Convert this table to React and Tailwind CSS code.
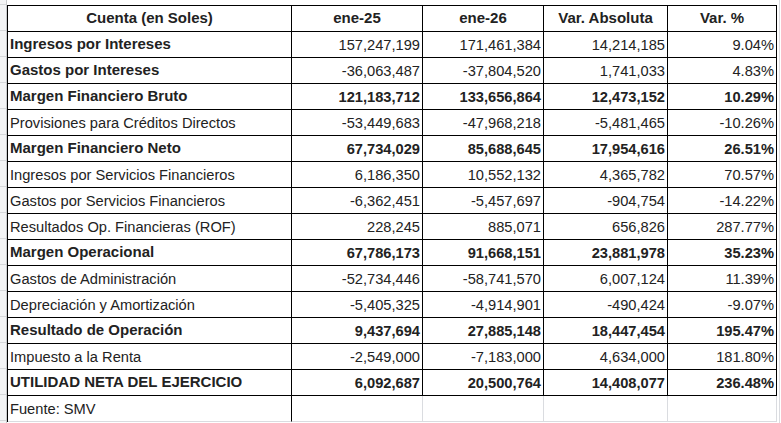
const rows = [
  { label: 'Ingresos por Intereses', values: ['157,247,199', '171,461,384', '14,214,185', '9.04%'], boldLabel: true },
  { label: 'Gastos por Intereses', values: ['-36,063,487', '-37,804,520', '1,741,033', '4.83%'], boldLabel: true },
  { label: 'Margen Financiero Bruto', values: ['121,183,712', '133,656,864', '12,473,152', '10.29%'], bold: true },
  { label: 'Provisiones para Créditos Directos', values: ['-53,449,683', '-47,968,218', '-5,481,465', '-10.26%'] },
  { label: 'Margen Financiero Neto', values: ['67,734,029', '85,688,645', '17,954,616', '26.51%'], bold: true },
  { label: 'Ingresos por Servicios Financieros', values: ['6,186,350', '10,552,132', '4,365,782', '70.57%'] },
  { label: 'Gastos por Servicios Financieros', values: ['-6,362,451', '-5,457,697', '-904,754', '-14.22%'] },
  { label: 'Resultados Op. Financieras (ROF)', values: ['228,245', '885,071', '656,826', '287.77%'] },
  { label: 'Margen Operacional', values: ['67,786,173', '91,668,151', '23,881,978', '35.23%'], bold: true },
  { label: 'Gastos de Administración', values: ['-52,734,446', '-58,741,570', '6,007,124', '11.39%'] },
  { label: 'Depreciación y Amortización', values: ['-5,405,325', '-4,914,901', '-490,424', '-9.07%'] },
  { label: 'Resultado de Operación', values: ['9,437,694', '27,885,148', '18,447,454', '195.47%'], bold: true },
  { label: 'Impuesto a la Renta', values: ['-2,549,000', '-7,183,000', '4,634,000', '181.80%'] },
  { label: 'UTILIDAD NETA DEL EJERCICIO', values: ['6,092,687', '20,500,764', '14,408,077', '236.48%'], bold: true },
];

const headers = ['Cuenta (en Soles)', 'ene-25', 'ene-26', 'Var. Absoluta', 'Var. %'];

// row header strip on the left edge of the sheet
const stripCells = Array.from({ length: 17 });

const App = () => {
  return (
    <div className="w-[781px] h-[423px] bg-white overflow-hidden flex font-['Liberation_Sans',Arial,sans-serif] text-[14.67px] text-[#222]">
      <div className="w-[7px] shrink-0 flex flex-col bg-[#f3f4f5] border-r border-[#c9cbcd]">
        <div className="h-[5px] shrink-0 border-b border-[#d6d8da]" />
        {stripCells.map((_, i) => (
          <div key={i} className="h-[26px] shrink-0 border-b border-[#d6d8da]" />
        ))}
      </div>

      <div className="flex flex-col shrink-0">
        <div className="h-[5px] shrink-0" />
        <div className="grid grid-cols-[284px_131px_121px_124px_109px] border-l border-t border-black">
          {headers.map((header) => (
            <div
              key={header}
              className="h-[26px] flex items-center justify-center font-bold text-[15px] border-r border-b border-black"
            >
              {header}
            </div>
          ))}

          {rows.map((row) => (
            <div key={row.label} className="contents">
              <div
                className={`h-[26px] flex items-center pl-[2px] whitespace-nowrap border-r border-b border-black ${
                  row.bold || row.boldLabel ? 'font-bold text-[15px]' : ''
                }`}
              >
                {row.label}
              </div>
              {row.values.map((value, idx) => (
                <div
                  key={idx}
                  className={`h-[26px] flex items-center justify-end pr-[2px] whitespace-nowrap border-r border-b border-black ${
                    row.bold ? 'font-bold' : ''
                  }`}
                >
                  {value}
                </div>
              ))}
            </div>
          ))}

          <div className="h-[26px] flex items-center pl-[2px] border-r border-b border-r-black border-b-[#dadce0]">
            Fuente: SMV
          </div>
          <div className="h-[26px] border-r border-b border-[#dadce0]" />
          <div className="h-[26px] border-r border-b border-[#dadce0]" />
          <div className="h-[26px] border-r border-b border-[#dadce0]" />
          <div className="h-[26px] border-r border-b border-[#dadce0]" />
        </div>
      </div>

      <div className="w-[2px] shrink-0" />
      <div className="flex-1 border-l border-[#dadce0]" />
    </div>
  );
};

export default App;
